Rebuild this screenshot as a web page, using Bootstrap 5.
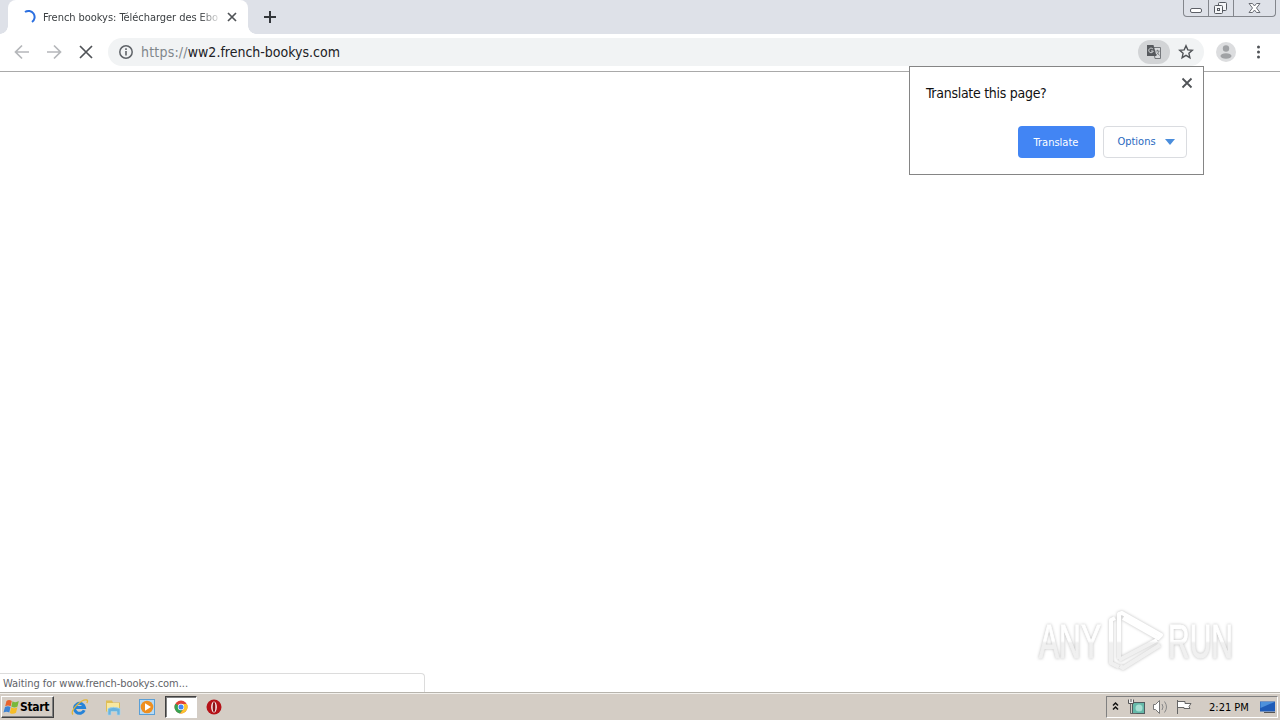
<!DOCTYPE html>
<html lang="en">
<head>
  <meta charset="UTF-8">
  <meta name="viewport" content="width=device-width, initial-scale=1.0">
  <title>French bookys</title>
  <link href="https://cdn.jsdelivr.net/npm/bootstrap@5.3.2/dist/css/bootstrap.min.css" rel="stylesheet">
  <style>
    body {
      height: 720px;
      font-family: "DejaVu Sans Condensed", "DejaVu Sans", sans-serif;
      font-stretch: condensed;
      font-size: 11px;
      line-height: 14px;
      color: #202124;
    }

    svg {
      display: block;
      flex-shrink: 0;
    }

    /* tab strip */
    .tab-strip {
      height: 34px;
      background: #dee1e8;
    }

    .tab-active {
      position: relative;
      width: 240px;
      margin-left: 8px;
      padding: 0 10px 0 13px;
      background: #fff;
      border-radius: 8px 8px 0 0;
    }

    .tab-active::before,
    .tab-active::after {
      content: "";
      position: absolute;
      bottom: 0;
      width: 8px;
      height: 8px;
    }

    .tab-active::before {
      left: -8px;
      background: radial-gradient(circle at 0 0, #dee1e8 7.5px, #fff 8px);
    }

    .tab-active::after {
      right: -8px;
      background: radial-gradient(circle at 100% 0, #dee1e8 7.5px, #fff 8px);
    }

    .tab-title {
      width: 177px;
      margin-left: 7px;
      padding-top: 1px;
      letter-spacing: -0.05px;
      color: #3c4043;
      -webkit-mask-image: linear-gradient(to right, #000 88%, rgba(0, 0, 0, .1));
      mask-image: linear-gradient(to right, #000 88%, rgba(0, 0, 0, .1));
    }

    .window-buttons {
      width: 93px;
      height: 17px;
      margin-right: 4px;
      border: 1px solid #83868c;
      border-top: 0;
      border-radius: 0 0 4px 4px;
    }

    .window-buttons > div + div {
      border-left: 1px solid #83868c;
    }

    /* toolbar */
    .toolbar {
      height: 38px;
      padding: 2px 12px 3px 12px;
      border-bottom: 1px solid #a9a9a9;
    }

    .omnibox {
      width: 1096px;
      height: 28px;
      margin-left: 12px;
      padding: 0 10px;
      background: #f1f3f4;
      border-radius: 14px;
    }

    .address {
      margin-left: 7px;
      font-size: 14px;
      letter-spacing: 0;
      line-height: 20px;
    }

    .scheme {
      letter-spacing: .2px;
      color: #80868b;
    }

    .translate-chip {
      width: 32px;
      height: 24px;
      border-radius: 12px;
      background: #d2d4d6;
    }

    /* translate bubble */
    .bubble {
      position: absolute;
      left: 909px;
      top: 66px;
      width: 295px;
      height: 109px;
      padding: 10px 10px 16px 16px;
      background: #fff;
      border: 1px solid #858585;
    }

    .bubble-title {
      padding-top: 6px;
      font-size: 14px;
      line-height: 20px;
      letter-spacing: -0.28px;
      color: #111;
    }

    .bubble-actions {
      margin-right: 6px;
    }

    .bubble .btn {
      height: 32px;
      padding: 1px 0 0;
      font-size: 11px;
      line-height: 30px;
      border-radius: 4px;
    }

    .bubble .btn-translate {
      width: 77px;
      padding-right: 1px;
      color: #fff;
      background: #4285f4;
      border: 0;
    }

    .bubble .btn-options {
      width: 84px;
      padding: 0 0 0 2px;
      color: #2868c0;
      border: 1px solid #dadce0;
    }

    /* bottom of the page */
    .status-bubble {
      width: 425px;
      height: 19px;
      padding: 3px 2px 0 3px;
      letter-spacing: -0.05px;
      color: #5f6368;
      border: 1px solid #dcdcdc;
      border-left: 0;
      border-bottom: 0;
      border-radius: 0 4px 0 0;
    }

    .watermark {
      position: absolute;
      left: 1030px;
      top: 602px;
      filter: drop-shadow(0 0 1.5px rgba(0, 0, 0, .26));
    }

    .watermark text {
      font-family: "Liberation Sans", sans-serif;
      font-size: 48px;
      stroke-width: 1px;
    }

    /* taskbar */
    .taskbar {
      height: 28px;
      padding: 3px 2px 1px 1px;
      background: #d4cdc5;
      border-top: 1px solid #b7b4ad;
      box-shadow: inset 0 1px #f3f1ed;
      color: #000;
    }

    .start-button {
      width: 53px;
      height: 22px;
      padding-left: 1px;
      font-size: 12px;
      font-weight: bold;
      letter-spacing: -0.35px;
      border: 1px solid;
      border-color: #fff #404040 #404040 #fff;
      box-shadow: inset -1px -1px #808080;
    }

    .quick-launch {
      gap: 1.6px;
      margin-left: 10px;
    }

    .quick-item {
      width: 32px;
      height: 22px;
    }

    .quick-item.pressed {
      background: #fff;
      border: 1px solid;
      border-color: #404040 #fff #fff #404040;
      box-shadow: inset 1px 1px #808080;
    }

    .tray {
      width: 172px;
      height: 22px;
      padding-left: 5px;
      border: 1px solid;
      border-color: #808080 #fff #fff #808080;
    }

    .clock {
      margin-left: 7px;
      padding-top: 1px;
    }
  </style>
</head>
<body class="d-flex flex-column overflow-hidden bg-white">

  <!-- Tab strip -->
  <div class="tab-strip d-flex">
    <div class="tab-active d-flex align-items-center">
      <svg width="15" height="16" viewBox="0 0 15 16"><path d="M4 3A5.500 5.500 0 1 1 11 13" fill="none" stroke="#2b6fe0" stroke-width="2"/></svg>
      <div class="tab-title text-nowrap">French bookys: Télécharger des Ebo</div>
      <svg class="ms-auto" width="12" height="12" viewBox="0 0 12 12"><path d="M2 2l8 8M10 2l-8 8" stroke="#505357" stroke-width="1.7"/></svg>
    </div>
    <div class="d-flex align-items-center ms-3">
      <svg width="12" height="12" viewBox="0 0 12 12"><path d="M6 0v12M0 6h12" stroke="#33363b" stroke-width="2"/></svg>
    </div>
    <div class="window-buttons d-flex ms-auto">
      <div><svg width="24" height="16" viewBox="0 0 24 16"><rect x="6.500" y="8.500" width="11" height="4" rx="1.500" fill="#fff" stroke="#5d6067"/></svg></div>
      <div><svg width="24" height="16" viewBox="0 0 24 16"><g fill="#f5f6f8" stroke="#555960"><rect x="9.500" y="2.500" width="8" height="8" rx="1"/><rect x="5.500" y="5.500" width="8" height="8" rx="1"/><rect x="8.500" y="8.500" width="2" height="2"/></g></svg></div>
      <div><svg width="41" height="16" viewBox="0 0 41 16"><path d="M15 3.500h3.500l2 2.500 2-2.500H26L22.500 8l3.500 4.500h-3.500l-2-2.500-2 2.500H15L18.500 8z" fill="#fff" stroke="#6a6d74"/></svg></div>
    </div>
  </div>

  <!-- Toolbar -->
  <div class="toolbar d-flex align-items-center">
    <svg width="84" height="20" viewBox="0 0 84 20"><g fill="none" stroke-width="1.700"><path d="M17 10H4M10 3.500L3.500 10l6.500 6.500M35 10h13M42 3.500l6.500 6.500-6.500 6.500" stroke="#b5b7ba"/><path d="M68 4l12 12M80 4L68 16" stroke="#505357"/></g></svg>
    <div class="omnibox d-flex align-items-center">
      <svg width="16" height="16" viewBox="0 0 16 16"><circle cx="8" cy="8" r="6.200" fill="none" stroke="#5f6368" stroke-width="1.500"/><path d="M8 7v4.500M8 4.300V6" stroke="#5f6368" stroke-width="1.600"/></svg>
      <div class="address"><span class="scheme">https://</span>ww2.french-bookys.com</div>
      <div class="translate-chip d-flex align-items-center justify-content-center ms-auto">
        <svg width="16" height="16" viewBox="0 0 16 16"><path d="M7 3.500h7.500v11H9z" fill="#d8dadc" stroke="#75787c"/><path d="M1 1h6.500l3 11H1z" fill="#56595d"/><path d="M7 5.200A2.300 2.300 0 1 0 7.300 7H5" fill="none" stroke="#d2d4d6"/><path d="M9.500 7h4M11.500 5.800V7M13 7c-.5 2-1.500 3-3 4M11 8.500l2.500 3" fill="none" stroke="#75787c" stroke-width=".9"/></svg>
      </div>
      <svg class="ms-2" width="16" height="16" viewBox="0 0 16 16"><path d="M8 1.800l1.800 4.100 4.500.4-3.400 3 1 4.400L8 11.400l-3.900 2.300 1-4.400-3.400-3 4.500-.4z" fill="none" stroke="#505357" stroke-width="1.400"/></svg>
    </div>
    <svg class="ms-auto" width="20" height="20" viewBox="0 0 20 20"><circle cx="10" cy="10" r="10" fill="#dcdddf"/><circle cx="10" cy="6.500" r="3.200" fill="#a0a2a5"/><ellipse cx="10" cy="14" rx="5.500" ry="2.800" fill="#a0a2a5"/></svg>
    <svg class="ms-3" width="16" height="16" viewBox="0 0 16 16"><g fill="#505357"><circle cx="6.500" cy="3" r="1.500"/><circle cx="6.500" cy="8" r="1.500"/><circle cx="6.500" cy="13" r="1.500"/></g></svg>
  </div>

  <!-- Page -->
  <div class="flex-grow-1 d-flex align-items-end">
    <div class="status-bubble">Waiting for www.french-bookys.com...</div>
  </div>

  <!-- Taskbar -->
  <div class="taskbar d-flex">
    <div class="start-button d-flex align-items-center">
      <svg width="17" height="16" viewBox="0 0 17 16"><path d="M3.500 2q2.500-2 5.300 0L7.700 7.300Q5 5.800 2.200 7.300z" fill="#e8622c"/><path d="M9.500 2.300q3 2 6.300-.2L14.500 7.400q-3 2-6.200 0z" fill="#79b83c"/><path d="M2 8q3-1.500 5.500 0l-1.200 5.500Q3.500 12 .5 13.500z" fill="#3d83d4"/><path d="M8.200 8.300q3 1.800 6.200 0L13 13.700q-3 2-6.200.2z" fill="#f6bd27"/></svg>
      <span>Start</span>
    </div>
    <div class="quick-launch d-flex">
      <div class="quick-item d-flex align-items-center justify-content-center">
        <svg width="18" height="18" viewBox="0 0 18 18"><path d="M13.200 12.200A5 5 0 1 1 13.500 9.500H5" fill="none" stroke="#2583d8" stroke-width="3"/><path d="M2 16.500C-1.500 13 10.500.5 16 2c1 .5.500 2-.3 3" fill="none" stroke="#e4b634" stroke-width="1.300"/></svg>
      </div>
      <div class="quick-item d-flex align-items-center justify-content-center">
        <svg width="18" height="18" viewBox="0 0 18 18"><path d="M1 2.500h6l1 2h7v9H1z" fill="#dfbe55"/><path d="M2 5h12v8.500H2z" fill="#f8e8a0"/><path d="M3 17v-6.500q5-2.500 12 0V17h-3v-3.500H6V17z" fill="#68b3df" stroke="#a7d5ee" stroke-width=".7"/></svg>
      </div>
      <div class="quick-item d-flex align-items-center justify-content-center">
        <svg width="18" height="18" viewBox="0 0 18 18"><rect x="1.500" y="1.500" width="15" height="15" fill="#b6daf5" stroke="#5a9fd6"/><circle cx="9" cy="9" r="6.300" fill="#ee8f20"/><path d="M7 5.200l6 3.800-6 3.800z" fill="#fff"/></svg>
      </div>
      <div class="quick-item pressed d-flex align-items-center justify-content-center">
        <svg width="16" height="16" viewBox="0 0 16 16"><circle cx="8" cy="8" r="6.500" fill="#e04336"/><path d="M8 8L2.400 4.700A6.500 6.500 0 0 0 7 14.400l3.500-5z" fill="#36a352"/><path d="M8 5h5.800A6.500 6.500 0 0 1 7 14.400l4-5z" fill="#fbc52d"/><circle cx="8" cy="8" r="3.200" fill="#fff"/><circle cx="8" cy="8" r="2.500" fill="#4285f4"/></svg>
      </div>
      <div class="quick-item d-flex align-items-center justify-content-center">
        <svg width="16" height="16" viewBox="0 0 16 16"><circle cx="8" cy="8" r="7.500" fill="#b51218"/><ellipse cx="8" cy="8" rx="2.800" ry="5.600" fill="#fff"/><ellipse cx="8" cy="8" rx="1.400" ry="5" fill="#8c1116"/></svg>
      </div>
    </div>
    <div class="tray d-flex align-items-center ms-auto">
      <svg width="90" height="18" viewBox="0 0 90 18">
        <path d="M1 7.500L3.500 5 6 7.500M1 11.500L3.500 9 6 11.500" fill="none" stroke="#111" stroke-width="1.500"/>
        <rect x="20.500" y="4.500" width="12" height="11" fill="#65b9a9" stroke="#4f5c60"/><path d="M16.500 1.500v4h5v-4M19 1v3" fill="#eee" stroke="#555"/><path d="M18.500 6v9.500h6" fill="none" stroke="#666"/><circle cx="27" cy="10" r="3.500" fill="#a6ded2"/>
        <path d="M41.500 6.500h2l4-4v13l-4-4h-2z" fill="#fff" stroke="#777"/><path d="M50 6q2 3 0 6M52.500 3.500q4 5.500 0 11" fill="none" stroke="#888"/>
        <path d="M65.500 2v14M66 3.500h7v2h6l-2 3 1 2h-6v-1h-6" fill="#fff" stroke="#666"/>
      </svg>
      <span class="clock">2:21 PM</span>
      <svg class="ms-auto" width="18" height="18" viewBox="0 0 18 18"><rect x="1" y="3.500" width="15" height="10" fill="#1f5cb8"/><path d="M1.500 4h14L1.500 10z" fill="#4d91dc"/><path d="M5 14.500h11" stroke="#555"/></svg>
    </div>
  </div>

  <!-- Translate bubble -->
  <div class="bubble d-flex flex-column justify-content-between">
    <div class="d-flex justify-content-between align-items-start">
      <div class="bubble-title">Translate this page?</div>
      <svg width="12" height="12" viewBox="0 0 12 12"><path d="M1.500 1.500l9 9M10.500 1.500l-9 9" stroke="#505357" stroke-width="1.800"/></svg>
    </div>
    <div class="bubble-actions d-flex justify-content-end gap-2">
      <button class="btn btn-translate">Translate</button>
      <button class="btn btn-options d-flex align-items-center justify-content-center">Options
        <svg class="ms-2" width="11" height="6" viewBox="0 0 11 6"><path d="M1 0h10L6 6z" fill="#4a8ddc"/></svg>
      </button>
    </div>
  </div>

  <!-- Watermark -->
  <svg class="watermark" width="220" height="74" viewBox="0 0 220 74">
    <defs>
      <linearGradient id="fade" gradientUnits="userSpaceOnUse" x1="0" y1="39" x2="0" y2="41">
        <stop offset="0" stop-color="#fff"/>
        <stop offset="1" stop-color="#f0f0f0"/>
      </linearGradient>
    </defs>
    <text x="9" y="56" textLength="62" lengthAdjust="spacingAndGlyphs" fill="url(#fade)" stroke="url(#fade)">ANY</text>
    <text x="138" y="56" textLength="65" lengthAdjust="spacingAndGlyphs" fill="url(#fade)" stroke="url(#fade)">RUN</text>
    <g fill="none" stroke-width="4" stroke-linejoin="round" stroke="url(#fade)">
      <path d="M85 16l-4 2v43l8 4"/>
      <path d="M89 57V12l3-1 39 22-3 3-35-20"/>
      <path d="M89 58l38-20"/>
      <path d="M90 64l3 2 37-23"/>
    </g>
  </svg>

  <script src="https://cdn.jsdelivr.net/npm/bootstrap@5.3.2/dist/js/bootstrap.bundle.min.js"></script>
</body>
</html>
